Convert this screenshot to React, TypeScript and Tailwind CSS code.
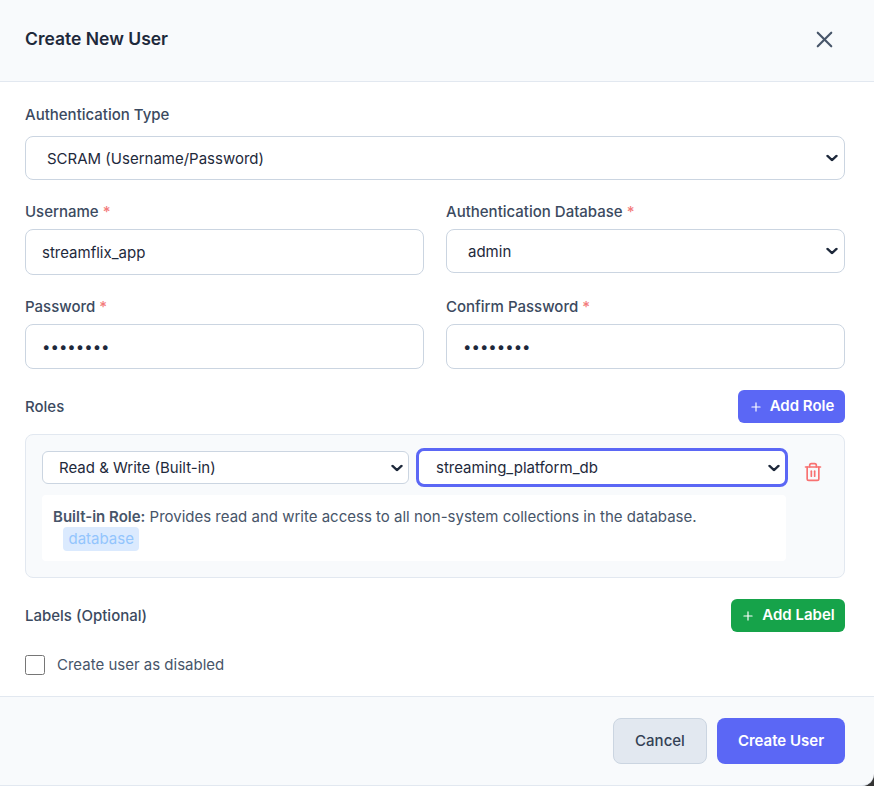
import { useState } from "react";
import { Plus, Trash2, X } from "lucide-react";

const labelCls = "block text-[15px] leading-[18px] font-medium text-[#3b4a60]";
const inputCls =
  "w-full px-4 rounded-[8px] border border-[#cbd5e1] bg-white text-[15px] text-[#1e293b] outline-none";

const Required = () => <span className="text-[#ef4444] opacity-70"> *</span>;

const Chevron = ({ right }: { right: string }) => (
  <svg
    viewBox="0 0 12 7"
    className={`absolute top-1/2 -translate-y-1/2 w-[12px] h-[7px] pointer-events-none ${right}`}
    fill="none"
    stroke="#1e293b"
    strokeWidth="2.3"
    strokeLinecap="round"
    strokeLinejoin="round"
  >
    <path d="M1.5 1.4 L6 5.6 L10.5 1.4" />
  </svg>
);

const BigSelect = ({ children }: { children: React.ReactNode }) => (
  <div className="relative">
    <select className="w-full h-[44px] pl-[21px] pr-8 pt-[2px] rounded-[8px] border border-[#cbd5e1] bg-white text-[15px] text-[#1e293b] outline-none appearance-none">
      {children}
    </select>
    <Chevron right="right-[7px]" />
  </div>
);

const App = () => {
  const [username, setUsername] = useState("streamflix_app");
  const [password, setPassword] = useState("password");
  const [confirm, setConfirm] = useState("password");

  return (
    <div className="w-[874px] h-[786px] overflow-hidden bg-[#333333] font-['Inter',sans-serif]">
      <div className="h-[82px] pl-[25px] pr-[36px] pb-[2px] flex items-center justify-between bg-[#f8fafc] border-b border-[#e2e8f0]">
        <h2 className="text-[17.5px] font-semibold text-[#1e293b]">Create New User</h2>
        <button type="button" className="text-[#475569]">
          <X className="w-[27px] h-[27px]" strokeWidth={1.9} />
        </button>
      </div>

      <form className="h-[614px] pl-[25px] pr-[29px] pt-[24px] bg-white">
        <label className={labelCls}>Authentication Type</label>
        <div className="mt-[12px]">
          <BigSelect>
            <option value="scram">SCRAM (Username/Password)</option>
          </BigSelect>
        </div>

        <div className="grid grid-cols-2 gap-x-[22px] mt-[23px]">
          <div>
            <label className={labelCls}>
              Username
              <Required />
            </label>
            <input
              className={`${inputCls} h-[46px] mt-[8px]`}
              value={username}
              onChange={(e) => setUsername(e.target.value)}
            />
          </div>
          <div>
            <label className={labelCls}>
              Authentication Database
              <Required />
            </label>
            <div className="mt-[8px]">
              <BigSelect>
                <option value="admin">admin</option>
              </BigSelect>
            </div>
          </div>
        </div>

        <div className="grid grid-cols-2 gap-x-[22px] mt-[23px]">
          <div>
            <label className={labelCls}>
              Password
              <Required />
            </label>
            <input
              type="password"
              className={`${inputCls} h-[45px] mt-[8px]`}
              value={password}
              onChange={(e) => setPassword(e.target.value)}
            />
          </div>
          <div>
            <label className={labelCls}>
              Confirm Password
              <Required />
            </label>
            <input
              type="password"
              className={`${inputCls} h-[45px] mt-[8px]`}
              value={confirm}
              onChange={(e) => setConfirm(e.target.value)}
            />
          </div>
        </div>

        <div className="flex items-center justify-between mt-[21px]">
          <label className={labelCls}>Roles</label>
          <button
            type="button"
            className="h-[33px] w-[107px] rounded-[6px] bg-[#5b67f5] text-white text-[15px] font-semibold flex items-center justify-center gap-[7px]"
          >
            <Plus className="w-[14px] h-[14px]" />
            Add Role
          </button>
        </div>

        <div className="mt-[11px] h-[144px] rounded-[8px] border border-[#e2e8f0] bg-[#f8fafc] px-[16px] pt-[13px]">
          <div className="flex items-center">
            <div className="relative">
              <select className="block w-[367px] h-[33px] pl-[16px] pr-6 pt-[1px] rounded-[6px] border border-[#cbd5e1] bg-white text-[15px] text-[#1e293b] outline-none appearance-none">
                <option value="rw">Read &amp; Write (Built-in)</option>
              </select>
              <Chevron right="right-[6px]" />
            </div>
            <div className="relative ml-[7px]">
              <select className="block w-[372px] h-[39px] pl-[17px] pr-6 pt-[1px] rounded-[8px] border-[3px] border-[#5b67f5] bg-white text-[15px] text-[#1e293b] outline-none appearance-none">
                <option value="db">streaming_platform_db</option>
              </select>
              <Chevron right="right-[8px]" />
            </div>
            <button type="button" className="ml-[15px] mt-[8px] text-[#f87171]">
              <Trash2 className="w-[20px] h-[20px]" />
            </button>
          </div>
          <div className="mt-[8px] w-[744px] h-[66px] rounded-[4px] bg-white px-[11px] pt-[10px] text-[15px] leading-[23px] text-[#475569]">
            <strong className="font-semibold">Built-in Role:</strong> Provides read and write access to all
            non-system collections in the database.
            <div className="-mt-[1px]">
              <span className="ml-[10px] inline-block h-[24px] leading-[24px] px-[5.5px] rounded-[4px] bg-[#dbeafe] text-[#93c5fd]">
                database
              </span>
            </div>
          </div>
        </div>

        <div className="flex items-center justify-between mt-[21px]">
          <label className={labelCls}>Labels (Optional)</label>
          <button
            type="button"
            className="h-[33px] w-[114px] rounded-[6px] bg-[#16a34a] text-white text-[15px] font-semibold flex items-center justify-center gap-[7px]"
          >
            <Plus className="w-[14px] h-[14px]" />
            Add Label
          </button>
        </div>

        <label className="flex items-center gap-[12px] mt-[22px] text-[15px] text-[#475569]">
          <input type="checkbox" className="w-[20px] h-[20px] m-0" />
          Create user as disabled
        </label>
      </form>

      <div className="h-[90px] pl-[25px] pr-[29px] pt-[21px] flex justify-end gap-[10px] bg-[#f8fafc] border-t border-b border-[#e2e8f0] rounded-br-[12px]">
        <button
          type="button"
          className="w-[94px] h-[46px] rounded-[8px] border border-[#cbd5e1] bg-[#e2e8f0] text-[15px] font-medium text-[#334155]"
        >
          Cancel
        </button>
        <button
          type="button"
          className="w-[128px] h-[46px] rounded-[8px] bg-[#5b67f5] text-[15px] font-semibold text-white"
        >
          Create User
        </button>
      </div>
    </div>
  );
};

export default App;
